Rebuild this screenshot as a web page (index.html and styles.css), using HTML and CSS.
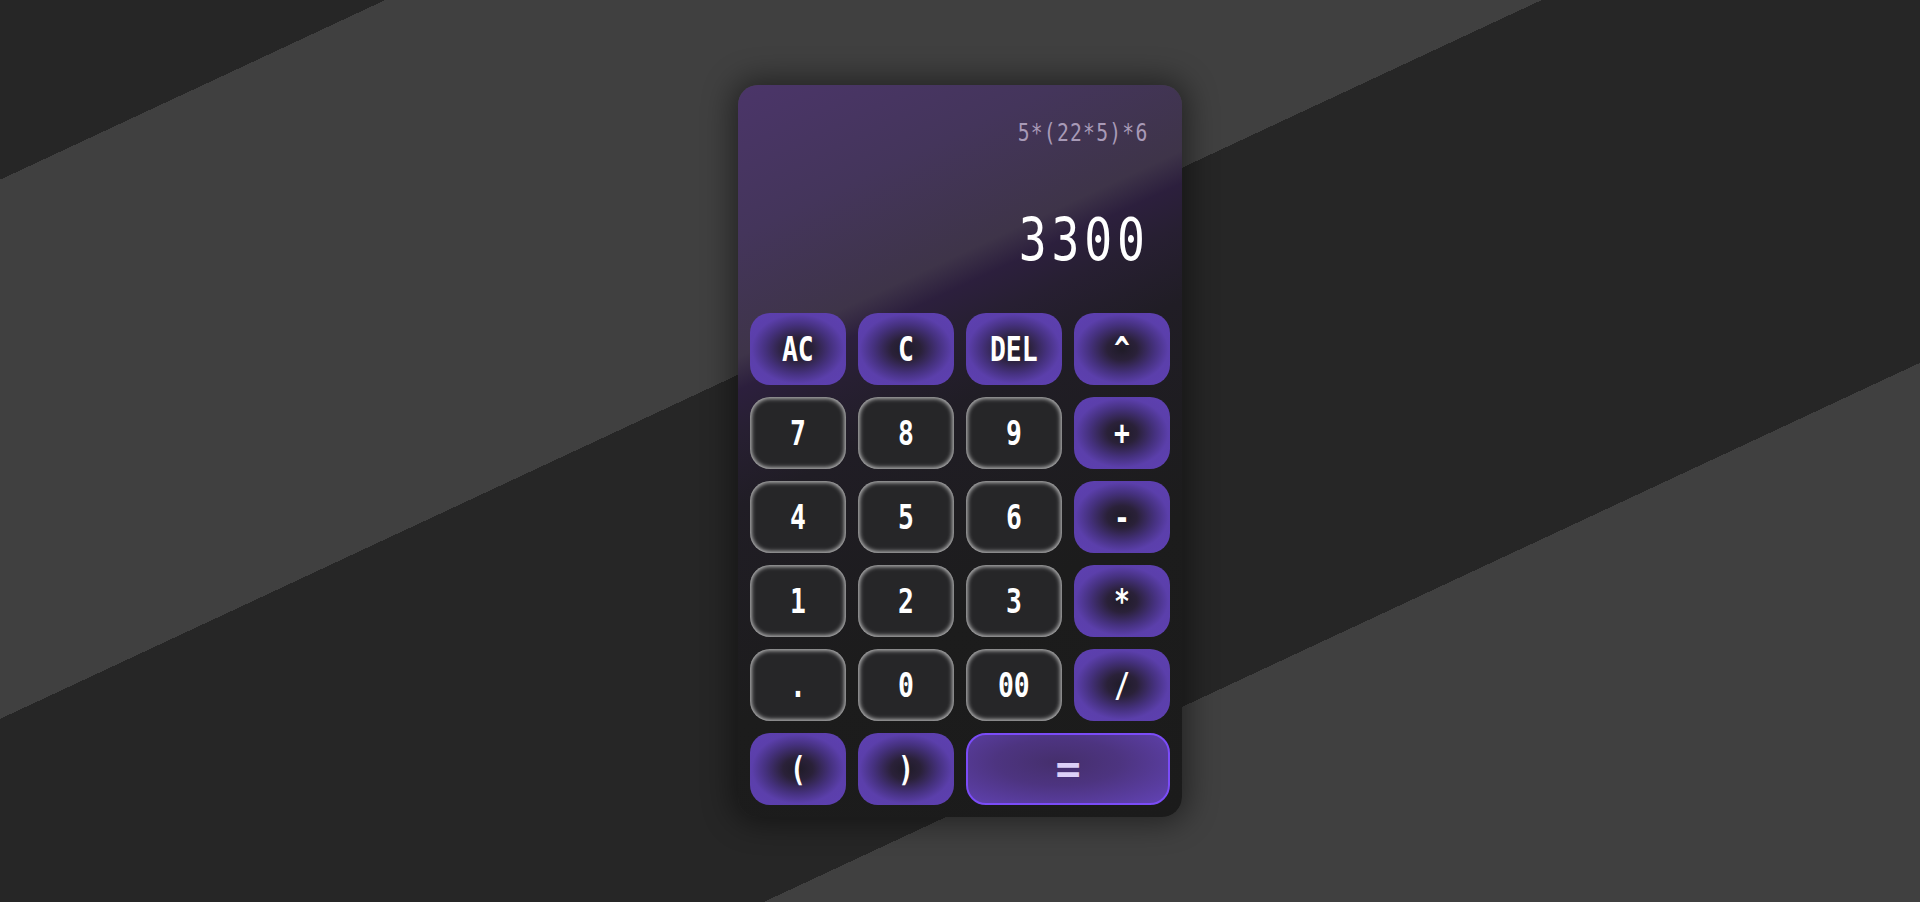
FILE: index.html
```html
<!DOCTYPE html>
<html lang="en">
<head>
<meta charset="utf-8">
<title>Calculator</title>
<link rel="stylesheet" href="styles.css">
</head>
<body>
<main class="calc">
  <section class="display">
    <div class="expr"><span>5*(22*5)*6</span></div>
    <div class="result"><span>3300</span></div>
  </section>
  <section class="keys">
    <button class="key op"><span>AC</span></button>
    <button class="key op"><span>C</span></button>
    <button class="key op"><span>DEL</span></button>
    <button class="key op"><span>^</span></button>

    <button class="key num"><span>7</span></button>
    <button class="key num"><span>8</span></button>
    <button class="key num"><span>9</span></button>
    <button class="key op"><span>+</span></button>

    <button class="key num"><span>4</span></button>
    <button class="key num"><span>5</span></button>
    <button class="key num"><span>6</span></button>
    <button class="key op"><span>-</span></button>

    <button class="key num"><span>1</span></button>
    <button class="key num"><span>2</span></button>
    <button class="key num"><span>3</span></button>
    <button class="key op"><span>*</span></button>

    <button class="key num"><span>.</span></button>
    <button class="key num"><span>0</span></button>
    <button class="key num"><span>00</span></button>
    <button class="key op"><span>/</span></button>

    <button class="key op"><span>(</span></button>
    <button class="key op"><span>)</span></button>
    <button class="key equals"><span>=</span></button>
  </section>
</main>
</body>
</html>
```
FILE: styles.css
```css
* {
  box-sizing: border-box;
}

html, body {
  margin: 0;
  height: 100%;
}

body {
  min-height: 100vh;
  display: flex;
  align-items: center;
  justify-content: center;
  font-family: "DejaVu Sans Mono", "Liberation Mono", monospace;
  background: linear-gradient(155deg,
    #262626 0%, #262626 10%,
    #404040 10%, #404040 40%,
    #262626 40%, #262626 70%,
    #404040 70%, #404040 100%);
}

.calc {
  width: 444px;
  border-radius: 20px;
  overflow: hidden;
  display: flex;
  flex-direction: column;
  background: linear-gradient(155deg,
    #4b3569 0%,
    #44355b 16%,
    #3e3449 29%,
    #2c1f3d 32.5%,
    #271f32 37%,
    #201d25 45%,
    #1c1c1c 68%,
    #1b1b1b 100%);
  box-shadow: 0 0 30px 6px rgba(0, 0, 0, 0.45);
}

.display {
  height: 216px;
  padding: 36px 32px 32px;
  display: flex;
  flex-direction: column;
  justify-content: space-between;
  text-align: right;
  color: #fff;
}

.expr {
  font-size: 24px;
  line-height: 24px;
  height: 24px;
  margin-right: 2px;
  color: #a89ab7;
}

.expr span {
  display: inline-block;
  letter-spacing: 1.5px;
  transform: scaleX(0.82);
  transform-origin: right center;
}

.result {
  font-size: 58px;
  line-height: 58px;
  height: 58px;
  color: #ffffff;
}

.result span {
  display: inline-block;
  letter-spacing: 6px;
  transform: scaleX(0.8);
  transform-origin: right center;
}

.keys {
  display: grid;
  grid-template-columns: repeat(4, 96px);
  grid-auto-rows: 72px;
  gap: 12px;
  padding: 12px;
}

.key {
  margin: 0;
  padding: 0;
  border: none;
  border-radius: 20px;
  display: flex;
  align-items: center;
  justify-content: center;
  color: #ffffff;
  font-family: "DejaVu Sans Mono", "Liberation Mono", monospace;
  font-weight: bold;
  font-size: 33px;
  line-height: 33px;
  cursor: pointer;
}

.key span {
  display: inline-block;
  transform: scaleX(0.8);
}

.num {
  background: #262628;
  box-shadow: inset 0 0 4px 1.5px rgba(255, 255, 255, 0.7);
}

.op {
  background: radial-gradient(ellipse at center,
    #1f1b27 0%,
    #2a2139 22%,
    #45317e 48%,
    #5b3fab 68%,
    #5e40b2 100%);
}

.equals {
  grid-column: span 2;
  border: 2px solid #7b4cf8;
  background: radial-gradient(ellipse at 45% 40%,
    #452f6c 0%,
    #4d3480 40%,
    #6243b6 100%);
  color: #ddd0f8;
  font-size: 40px;
}

.equals span {
  transform: scaleX(1.05);
  text-shadow: 0 0 1px rgba(60, 40, 100, 0.8);
}
```
